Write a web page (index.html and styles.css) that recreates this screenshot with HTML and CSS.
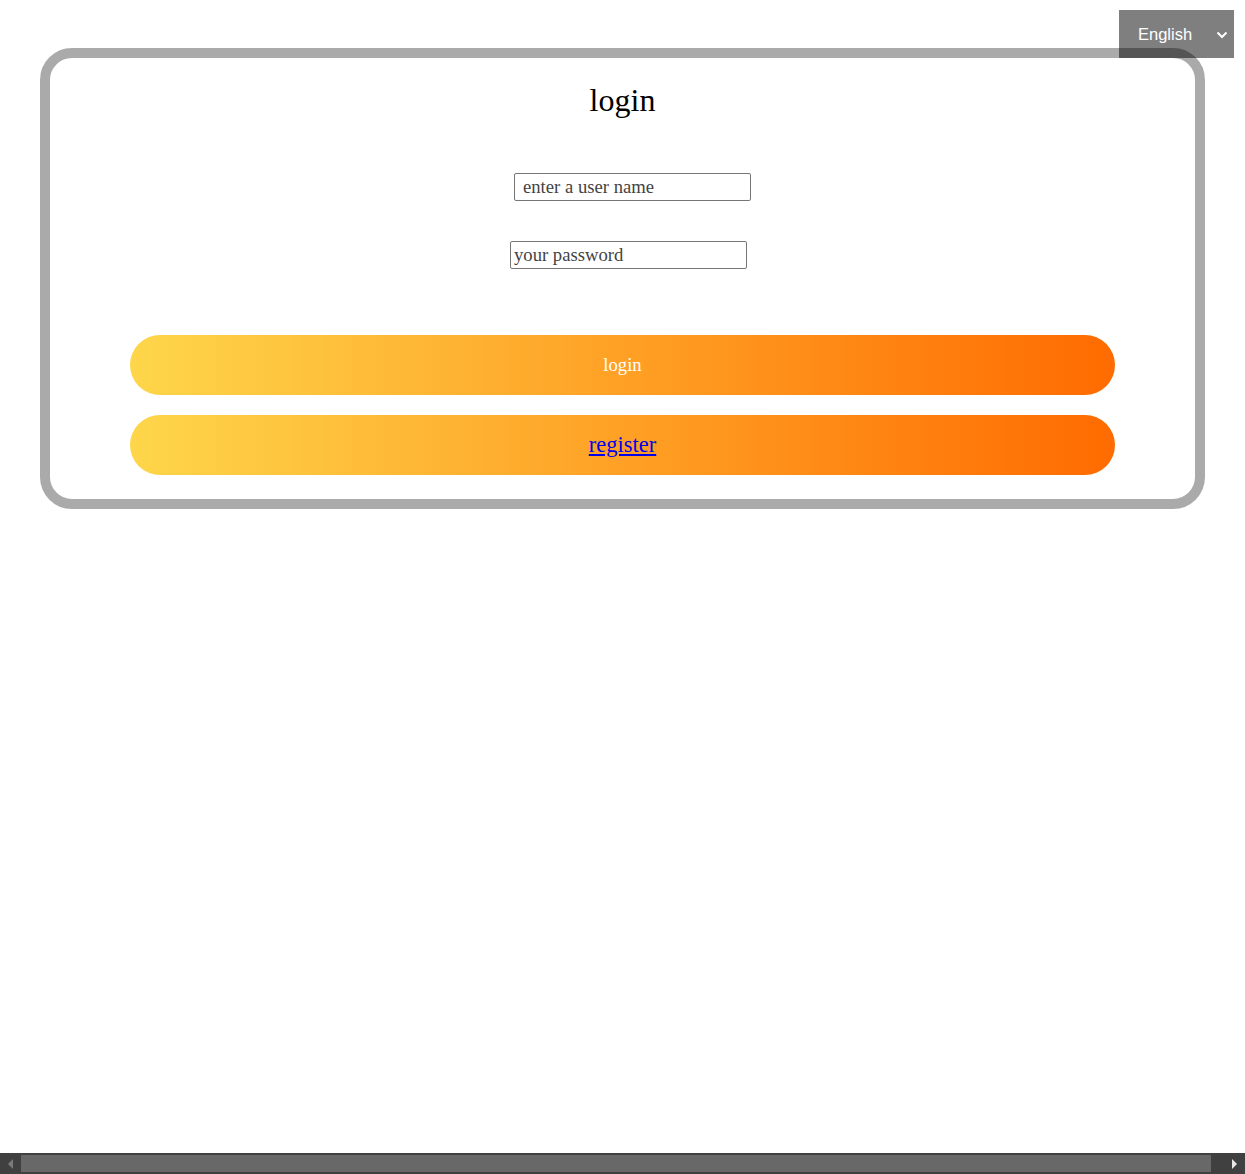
FILE: index.html
```html
<!DOCTYPE html>
<html lang="en">
<head>
<meta charset="utf-8">
<title>login</title>
<link rel="stylesheet" href="styles.css">
</head>
<body>
<div class="page">
  <div class="card">
    <h1 class="title">login</h1>
    <form class="form">
      <input class="field field-user" type="text" placeholder="enter a user name">
      <input class="field field-pass" type="password" placeholder="your password">
      <div class="actions">
        <button class="btn" type="button">login</button>
        <div class="btn btn-link"><a href="#" class="register">register</a></div>
      </div>
    </form>
  </div>
</div>
<div class="lang">
  <span class="lang-text">English</span>
  <svg class="lang-chevron" width="12" height="8" viewBox="0 0 12 8"><path d="M1.5 1.5 L6 6 L10.5 1.5" fill="none" stroke="#fff" stroke-width="2"/></svg>
</div>
<div class="hscroll">
  <div class="hscroll-btn"><svg width="6" height="10" viewBox="0 0 6 10"><path d="M5 0 L0 5 L5 10 Z" fill="#7a7a7a"/></svg></div>
  <div class="hscroll-track"><div class="hscroll-thumb"></div></div>
  <div class="hscroll-btn"><svg width="6" height="10" viewBox="0 0 6 10"><path d="M0 0 L5 5 L0 10 Z" fill="#e8e8e8"/></svg></div>
</div>
</body>
</html>
```

FILE: styles.css
```css
html, body {
  margin: 0;
  padding: 0;
}
body {
  font-family: "Liberation Serif", "Times New Roman", serif;
  font-size: 18.67px;
  background: #fff;
}
.page {
  width: 1259px;
  padding-top: 48px;
}
.card {
  margin: 0 54px 0 40px;
  border: 10px solid #aaaaaa;
  border-radius: 32px;
  padding: 0 0 24px;
  box-sizing: border-box;
}
.title {
  margin: 24px 0 0;
  font-size: 32px;
  font-weight: normal;
  line-height: 37px;
  text-align: center;
  color: #000;
}
.form {
  display: flex;
  flex-direction: column;
  align-items: center;
}
.field {
  width: 237px;
  height: 28px;
  box-sizing: border-box;
  border: 1px solid #767676;
  border-radius: 2px;
  font-family: "Liberation Serif", "Times New Roman", serif;
  font-size: 18.67px;
  color: #333;
  background: #fff;
  outline: none;
}
.field::placeholder {
  color: #444;
  opacity: 1;
}
.field-user {
  margin: 54px 0 0 20px;
  padding: 0 4px 0 8px;
}
.field-pass {
  margin: 40px 0 0 12px;
  padding: 0 4px 0 3px;
}
.actions {
  margin-top: 66px;
  align-self: stretch;
  padding: 0 80px;
  display: flex;
  flex-direction: column;
  gap: 20px;
}
.btn {
  height: 60px;
  border: none;
  border-radius: 30px;
  background: linear-gradient(to right, #fed64a, #ff6b00);
  color: #fff;
  font-family: "Liberation Serif", "Times New Roman", serif;
  font-size: 18.67px;
  display: flex;
  align-items: center;
  justify-content: center;
  padding: 0;
}
.register {
  color: #0000ee;
  font-size: 22.5px;
}
.lang {
  position: absolute;
  top: 10px;
  right: 11px;
  width: 115px;
  height: 48px;
  box-sizing: border-box;
  background: rgba(0, 0, 0, 0.5);
  color: #fff;
  font-family: "Liberation Sans", Arial, sans-serif;
  font-size: 16.5px;
  display: flex;
  align-items: center;
  padding-left: 19px;
}
.lang-text {
  flex: 1;
}
.lang-chevron {
  margin-right: 6px;
  margin-top: 2px;
}
.hscroll {
  position: fixed;
  left: 0;
  right: 0;
  bottom: 0;
  height: 21px;
  background: #404040;
  display: flex;
  align-items: stretch;
}
.hscroll-btn {
  width: 21px;
  display: flex;
  align-items: center;
  justify-content: center;
}
.hscroll-track {
  flex: 1;
  padding: 2px 13px 2px 0;
  display: flex;
}
.hscroll-thumb {
  flex: 1;
  background: #686868;
}
```
